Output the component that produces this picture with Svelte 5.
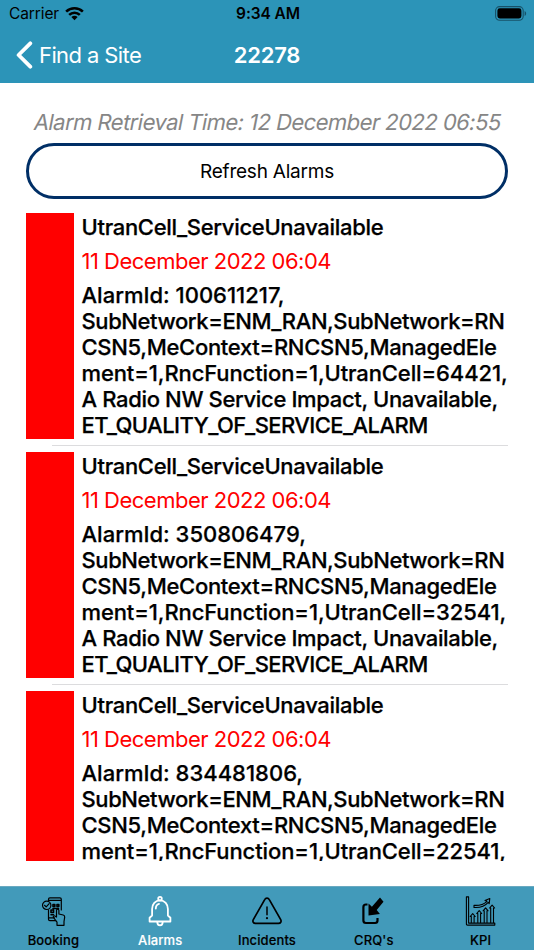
<script lang="ts">
	type Alarm = { name: string; time: string; lines: string[] };

	const details = (id: string, cell: string) => [
		`AlarmId: ${id},`,
		'SubNetwork=ENM_RAN,SubNetwork=RN',
		'CSN5,MeContext=RNCSN5,ManagedEle',
		`ment=1,RncFunction=1,UtranCell=${cell},`,
		'A Radio NW Service Impact, Unavailable,',
		'ET_QUALITY_OF_SERVICE_ALARM'
	];

	const alarms: Alarm[] = [
		['100611217', '64421'],
		['350806479', '32541'],
		['834481806', '22541']
	].map(([id, cell]) => ({
		name: 'UtranCell_ServiceUnavailable',
		time: '11 December 2022 06:04',
		lines: details(id, cell)
	}));

	const TABS = ['Booking', 'Alarms', 'Incidents', "CRQ's", 'KPI'];
	let active = $state('Alarms');
</script>

<div class="screen">
	<header>
		<div class="status">
			<span class="carrier">
				Carrier
				<svg class="wifi" width="19" height="15" viewBox="0 0 20 15">
					<g fill="none" stroke="#000" stroke-width="2.7">
						<path d="M1.2 5.6a12.6 12.6 0 0 1 17.6 0" />
						<path d="M4.4 9a8 8 0 0 1 11.2 0" />
					</g>
					<path d="M6.7 11.3a4.8 4.8 0 0 1 6.6 0L10 14.7z" />
				</svg>
			</span>
			<span class="clock">9:34 AM</span>
			<svg class="battery" width="32" height="15" viewBox="0 0 32 15">
				<rect x=".6" y=".6" width="27.6" height="13.6" rx="4" fill="none" stroke="#175168" stroke-width="1.1" />
				<rect x="2.4" y="2.3" width="24" height="10.2" rx="2.4" />
				<path d="M29.6 5v5c2-.7 2-4.3 0-5z" fill="#175168" />
			</svg>
		</div>
		<div class="nav">
			<button type="button" class="back">
				<svg width="17" height="28" viewBox="0 0 17 28">
					<path d="M14.3 2.3 2.6 14l11.7 11.7" fill="none" stroke="#fff" stroke-width="3.8" stroke-linecap="round" stroke-linejoin="round" />
				</svg>
				<span>Find a Site</span>
			</button>
			<h1>22278</h1>
			<span></span>
		</div>
	</header>

	<main>
		<p class="retrieved">Alarm Retrieval Time: 12 December 2022 06:55</p>
		<button type="button" class="refresh">Refresh Alarms</button>
		<div class="list">
			{#each alarms as alarm}
				<article class="alarm">
					<div class="severity"></div>
					<div class="info">
						<h2>{alarm.name}</h2>
						<p class="time">{alarm.time}</p>
						<p class="detail">
							{#each alarm.lines as line}
								<span>{line}</span>
							{/each}
						</p>
					</div>
				</article>
			{/each}
		</div>
	</main>

	<nav class="tabs">
		{#each TABS as tab}
			<button type="button" class="tab" class:active={active === tab} onclick={() => (active = tab)}>
				<svg width="32" height="32" viewBox="0 0 32 32" fill="none" stroke="currentColor" stroke-linecap="round" stroke-linejoin="round">
					{#if tab === 'Booking'}
						<g stroke-width="1.2">
							<path d="M11.5 5V3.2Q11.5 1.8 12.9 1.8H22.9Q24.3 1.8 24.3 3.2V14M11.5 14v9.3q0 1.4 1.4 1.4h5.6M11.5 4.3h12.8M11.5 21.8h6" />
							<circle cx="9.7" cy="9.3" r="4.2" />
							<path d="m7.5 9.3 1.7 1.6 3-3.2" />
							<path d="M16 8.5h1.8v2H16zM20 8.5h1.8v2H20zM14 14h2.5v2.5H14zM14 18.7h2.5M16 12.5h5.5" stroke-width="1.6" />
							<path d="M19.5 21v-6.5c0-1.8 2.4-1.8 2.4 0V18l4.3 1c1.1.3 1.6 1 1.5 2.2L27 25.5v3.800h-7v-3.200l-3.500-4.600c-.8-1.200.8-2.300 1.800-1.300z" />
						</g>
					{:else if tab === 'Alarms'}
						<g stroke-width="1.8">
							<path d="M5.6 25.5v-3.800l2.500-2.200V13c0-4.800 3.200-8.600 7.900-8.600s7.900 3.800 7.900 8.600v6.500l2.500 2.200v3.800z" />
							<circle cx="16" cy="2.7" r="1.8" />
							<path d="M13.300 26c0 4.500 5.400 4.500 5.400 0M11.800 12.500c0-2.600 1.200-4.200 3.200-4.700" />
						</g>
					{:else if tab === 'Incidents'}
						<path d="M13.700 3.600c1-1.900 3.600-1.900 4.600 0l11.400 20.100c1 1.800-.1 3.700-2.200 3.700h-23c-2.100 0-3.200-1.900-2.200-3.700z" stroke-width="1.7" />
						<path d="M16 11v7.700" stroke-width="1.5" />
						<circle cx="16" cy="22.2" r="1.1" fill="currentColor" stroke="none" />
					{:else if tab === 'CRQ\'s'}
						<path d="M9.500 8.500H8Q5.400 8.500 5.400 11v13.500q0 2.500 2.500 2.500h9.200q2.400 0 2.400-2.400V22" stroke-width="2.2" stroke-linecap="butt" />
						<path d="m22 1.500 3.500 4.200-6.800 8.300 3.200 4.100-11.400 1.400V7.500l3.400 3.200z" fill="currentColor" stroke="none" />
					{:else}
						<g stroke-width="1.1">
							<path d="M1.400.9h2.200v26.200h26.200v2H2.600q-1.200 0-1.200-1.200z" />
							<path d="M6.300 26.500v-6H5.200l2.500-2.800 2.500 2.800H9.100v6M12.800 26.500v-9h-1.100l2.500-2.800 2.500 2.800h-1.100v9M19.200 26.500V14.800h-1.100l2.500-2.900 2.500 2.900H22v11.700M25.700 26.500V12h-1.100l2.500-2.900 2.500 2.900h-1.100v14.500" />
							<path d="M9 9.300c6.300.3 10.500-1.500 13-4l-2-.7 4.800-2.100-.6 5.100-1-1.200c-3.700 4.300-8.700 5.500-14.200 5.100z" />
						</g>
					{/if}
				</svg>
				<span>{tab}</span>
			</button>
		{/each}
	</nav>
</div>

<style>
	:global(body) {
		background: #fff;
	}
	.screen {
		height: 950px;
		display: flex;
		flex-direction: column;
		overflow: hidden;
		font-family: Inter, 'Liberation Sans', sans-serif;
		color: #000;
	}
	button {
		font: inherit;
		color: inherit;
		background: none;
		border: 0;
		padding: 0;
	}
	h1,
	h2,
	p {
		margin: 0;
	}
	header {
		flex: none;
		height: 83px;
		background: #2c94b8;
	}
	.status,
	.nav {
		display: grid;
		grid-template-columns: 1fr auto 1fr;
		align-items: center;
	}
	.status {
		height: 27px;
		padding: 1px 7px 0 9px;
		box-sizing: border-box;
		font-size: 15.5px;
		line-height: 26px;
	}
	.carrier {
		display: flex;
		align-items: center;
		gap: 6px;
		letter-spacing: -0.1px;
	}
	.wifi {
		margin-top: -1px;
	}
	.clock {
		font-weight: 600;
		letter-spacing: -0.1px;
	}
	.battery {
		justify-self: end;
		margin-top: -1px;
	}
	.nav {
		height: 56px;
		padding: 0 16px;
		color: #fff;
	}
	.back {
		display: flex;
		align-items: center;
		gap: 6px;
		font-size: 22px;
		letter-spacing: -0.6px;
	}
	h1 {
		font-size: 22px;
		font-weight: 600;
		letter-spacing: -0.25px;
	}
	main {
		flex: none;
		height: 778px;
		box-sizing: border-box;
		padding: 25px 26px 0;
		overflow: hidden;
	}
	/* upright face slanted, so the "a" keeps its two-storey form */
	.retrieved {
		height: 35px;
		line-height: 28px;
		font-size: 22px;
		letter-spacing: -0.55px;
		color: #868686;
		text-align: center;
		white-space: nowrap;
		transform: skewX(-11deg);
	}
	.refresh {
		display: block;
		width: 100%;
		height: 56px;
		border: 3px solid #002f66;
		border-radius: 28px;
		font-size: 19px;
		letter-spacing: -0.22px;
	}
	.list {
		padding-top: 8px;
	}
	.alarm {
		display: flex;
		gap: 8px;
		height: 239px;
		box-sizing: border-box;
		padding: 6px 0 7px;
		background: linear-gradient(#dcdcde, #dcdcde) 26px 100% / 100% 1px no-repeat;
	}
	.severity {
		flex: none;
		width: 47.5px;
		background: #f00;
	}
	.info {
		padding-top: 1px;
		white-space: nowrap;
		font-size: 22px;
		line-height: 26px;
	}
	h2,
	.detail {
		font-size: inherit;
		font-weight: 500;
		-webkit-text-stroke: 0.25px currentColor;
	}
	h2 {
		letter-spacing: -0.31px;
	}
	.time {
		margin: 8px 0;
		color: #f00;
		letter-spacing: -0.5px;
	}
	.detail {
		letter-spacing: -0.35px;
	}
	.detail span {
		display: block;
	}
	.detail span:nth-child(1) {
		letter-spacing: 0;
	}
	.detail span:nth-child(2) {
		letter-spacing: -0.41px;
	}
	.detail span:nth-child(3) {
		letter-spacing: -0.3px;
	}
	.detail span:nth-child(4) {
		letter-spacing: -0.11px;
	}
	.detail span:nth-child(6) {
		letter-spacing: -0.57px;
	}
	.tabs {
		margin-top: auto;
		height: 64px;
		display: grid;
		grid-template-columns: repeat(5, 1fr);
		box-sizing: border-box;
		border-top: 1px solid #69a9c0;
		background: #429aba;
	}
	.tab {
		display: flex;
		flex-direction: column;
		align-items: center;
		padding-top: 9px;
		font-size: 13px;
		font-weight: 500;
		letter-spacing: 0.1px;
		-webkit-text-stroke: 0.15px currentColor;
	}
	.tab span {
		line-height: 16px;
		margin-top: 4px;
	}
	.tab.active {
		color: #fff;
	}
</style>
